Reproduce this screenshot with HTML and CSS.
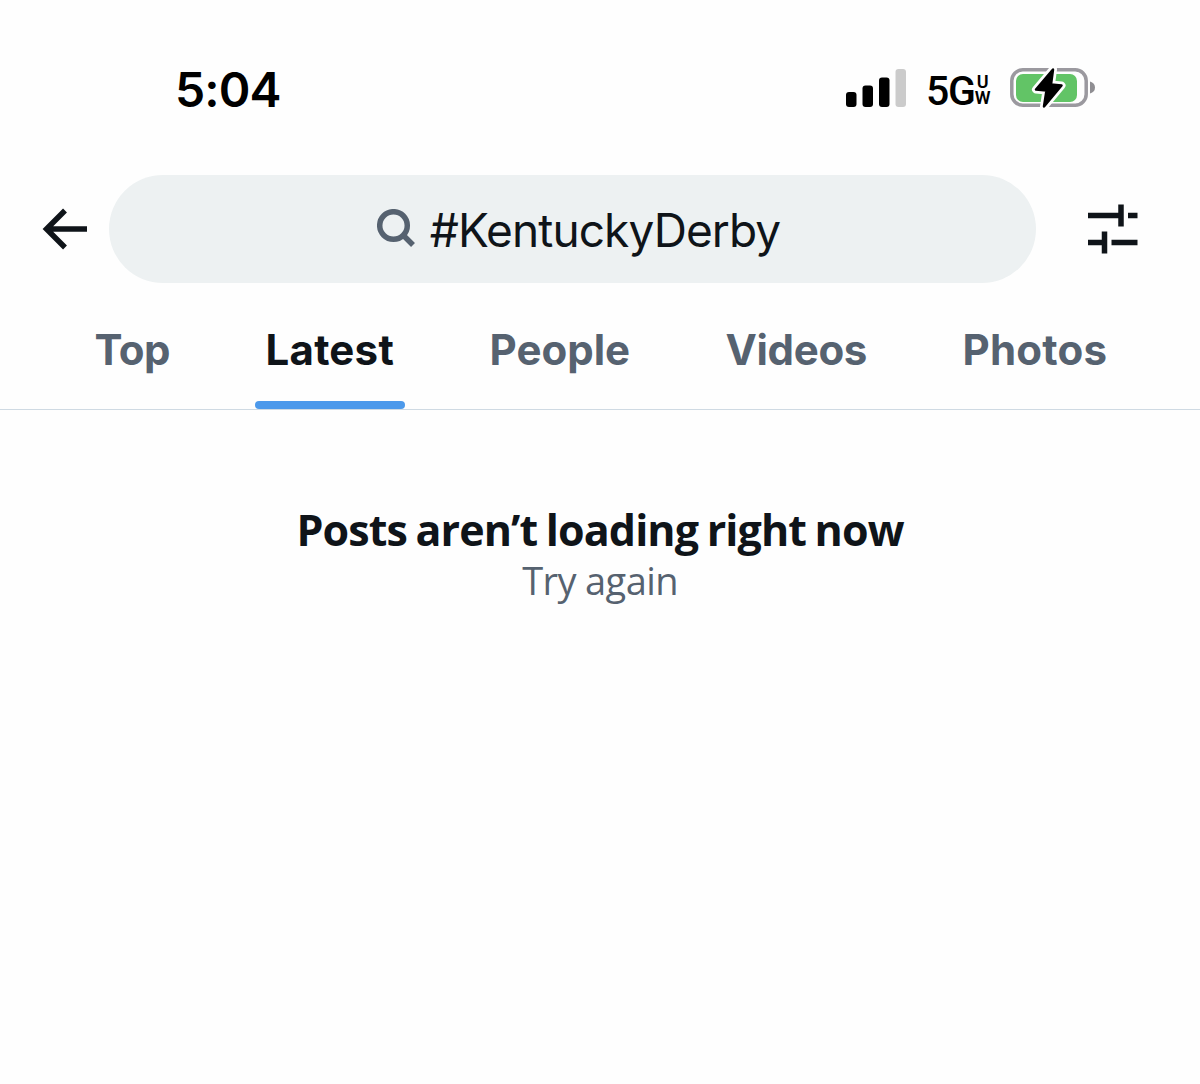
FILE: index.html
```html
<!DOCTYPE html>
<html lang="en">
<head>
  <meta charset="UTF-8" />
  <meta name="viewport" content="width=device-width, initial-scale=1.0" />
  <title>#KentuckyDerby - Search</title>
  <link rel="stylesheet" href="styles.css">
</head>
<body>
  <div class="status-bar">
    <div class="time">5:04</div>
    <div class="indicators">
      <svg class="signal" width="60" height="38" viewBox="0 0 60 38">
        <rect x="0" y="23" width="10.5" height="15" rx="3" />
        <rect x="16.5" y="16.5" width="10.5" height="21.5" rx="3" />
        <rect x="33" y="8.5" width="10.5" height="29.5" rx="3" />
        <rect class="off" x="49.5" y="0" width="10.5" height="38" rx="3" />
      </svg>
      <div class="network">
        <span class="gen">5G</span>
        <div class="band"><span>U</span><span>W</span></div>
      </div>
      <svg class="battery" width="86" height="42" viewBox="0 0 86 42">
        <rect class="shell" x="1.8" y="2.8" width="74.4" height="35.4" rx="11" />
        <rect class="level" x="6" y="7" width="61" height="28" rx="7" />
        <path class="cap" d="M80 14.5 Q85 16 85 20.5 Q85 25 80 26.5 Z" />
        <path class="bolt-gap" d="M43 2.500 L26 22.500 L36.500 23.500 L34 39.500 L51.500 18.500 L41 17.500 Z" />
        <path class="bolt" d="M43 2.500 L26 22.500 L36.500 23.500 L34 39.500 L51.500 18.500 L41 17.500 Z" />
      </svg>
    </div>
  </div>

  <header class="search-header">
    <button class="icon-btn back" aria-label="Back">
      <svg width="46" height="42" viewBox="0 0 46 42">
        <path d="M23 2.500 L4.500 21 L23 39.500 M4.500 21 H45" />
      </svg>
    </button>
    <div class="search-box">
      <svg width="38" height="39" viewBox="0 0 38 39">
        <circle cx="16.500" cy="16.500" r="13.800" />
        <path d="M26.500 26.500 L36 36" />
      </svg>
      <span class="query">#KentuckyDerby</span>
    </div>
    <button class="icon-btn filters" aria-label="Search filters">
      <svg width="50" height="50" viewBox="0 0 50 50">
        <path d="M0 11.500 H33 M33 0.500 V22.500 M40 11.500 H49.500" />
        <path d="M0 38.500 H16.500 M16.500 27.500 V49.500 M23.500 38.500 H49.500" />
      </svg>
    </button>
  </header>

  <nav class="tabs">
    <a class="tab top">Top</a>
    <a class="tab latest active">Latest</a>
    <a class="tab people">People</a>
    <a class="tab videos">Videos</a>
    <a class="tab photos">Photos</a>
  </nav>

  <main class="empty">
    <h1>Posts aren’t loading right now</h1>
    <p>Try again</p>
  </main>
</body>
</html>
```
FILE: styles.css
```css
:root {
  --fg: #0f1419;
  --muted: #566270;
  --pill: #edf1f2;
  --line: #cfdae3;
  --accent: #4c99eb;
}

* {
  box-sizing: border-box;
}

body {
  margin: 0;
  font-family: Inter, "Liberation Sans", sans-serif;
  background: #fefefe;
  color: var(--fg);
}

.status-bar {
  display: flex;
  justify-content: space-between;
  height: 175px;
  padding: 60px 104px 0 175px;
  color: #000;
}

.time {
  height: 60px;
  line-height: 60px;
  font-size: 48px;
  font-weight: 600;
  letter-spacing: -0.9px;
}

.indicators {
  display: flex;
  align-items: flex-start;
}

.signal {
  margin: 9px 20px 0 0;
}

.signal .off {
  fill: #cbcbcb;
}

.network {
  display: flex;
  width: 66px;
  height: 60px;
  margin-right: 18px;
  font-family: Roboto, sans-serif;
}

.gen {
  font-size: 41px;
  font-weight: 500;
  line-height: 62px;
  letter-spacing: -1.2px;
}

.band {
  display: flex;
  flex-direction: column;
  padding-top: 14px;
  font-size: 18px;
  font-weight: 600;
  line-height: 16px;
  text-align: center;
}

.battery {
  margin-top: 7px;
}

.shell {
  fill: none;
  stroke: #9b999f;
  stroke-width: 3.5;
}

.level {
  fill: #62c466;
}

.cap {
  fill: #8f8e92;
}

.bolt-gap {
  fill: #fefefe;
  stroke: #fefefe;
  stroke-width: 8;
  stroke-linejoin: round;
}

.bolt {
  fill: #000;
  stroke: #000;
  stroke-width: 2.5;
  stroke-linejoin: round;
}

.search-header {
  display: flex;
  align-items: center;
  height: 108px;
  padding-left: 42px;
}

.icon-btn {
  display: flex;
  padding: 0;
  border: none;
  background: none;
}

.icon-btn path {
  fill: none;
  stroke: var(--fg);
  stroke-width: 5.5;
}

.search-box {
  display: flex;
  align-items: center;
  justify-content: center;
  gap: 15px;
  width: 927px;
  height: 108px;
  margin: 0 52px 0 21px;
  padding-left: 12px;
  border-radius: 54px;
  background: var(--pill);
}

.search-box svg {
  margin-bottom: 2px;
  fill: none;
  stroke: var(--muted);
  stroke-width: 5.5;
}

.query {
  padding-top: 2px;
  font-size: 46px;
  letter-spacing: -0.9px;
}

.tabs {
  display: flex;
  gap: 73.5px;
  height: 127px;
  padding-left: 83.5px;
  border-bottom: 1px solid var(--line);
}

.tab {
  position: relative;
  padding: 0 11px;
  line-height: 134px;
  font-size: 42px;
  font-weight: 700;
  color: var(--muted);
}

.tab.top {
  letter-spacing: -0.5px;
}

.tab.latest,
.tab.photos {
  letter-spacing: 0.25px;
}

.tab.videos {
  letter-spacing: -0.35px;
}

.tab.active {
  color: var(--fg);
}

.tab.active::after {
  content: "";
  position: absolute;
  left: 0;
  right: 0;
  bottom: 0;
  height: 8px;
  border-radius: 4px;
  background: var(--accent);
}

.empty {
  padding: 95px 0 40px;
  text-align: center;
}

.empty h1 {
  margin: 0;
  font-family: "Open Sans", sans-serif;
  font-size: 43px;
  font-weight: 700;
  line-height: 50px;
  letter-spacing: -0.9px;
  word-spacing: -1.7px;
}

.empty p {
  margin: 0;
  font-family: "Open Sans", sans-serif;
  font-size: 38px;
  line-height: 50px;
  letter-spacing: -0.6px;
  color: var(--muted);
}
```
